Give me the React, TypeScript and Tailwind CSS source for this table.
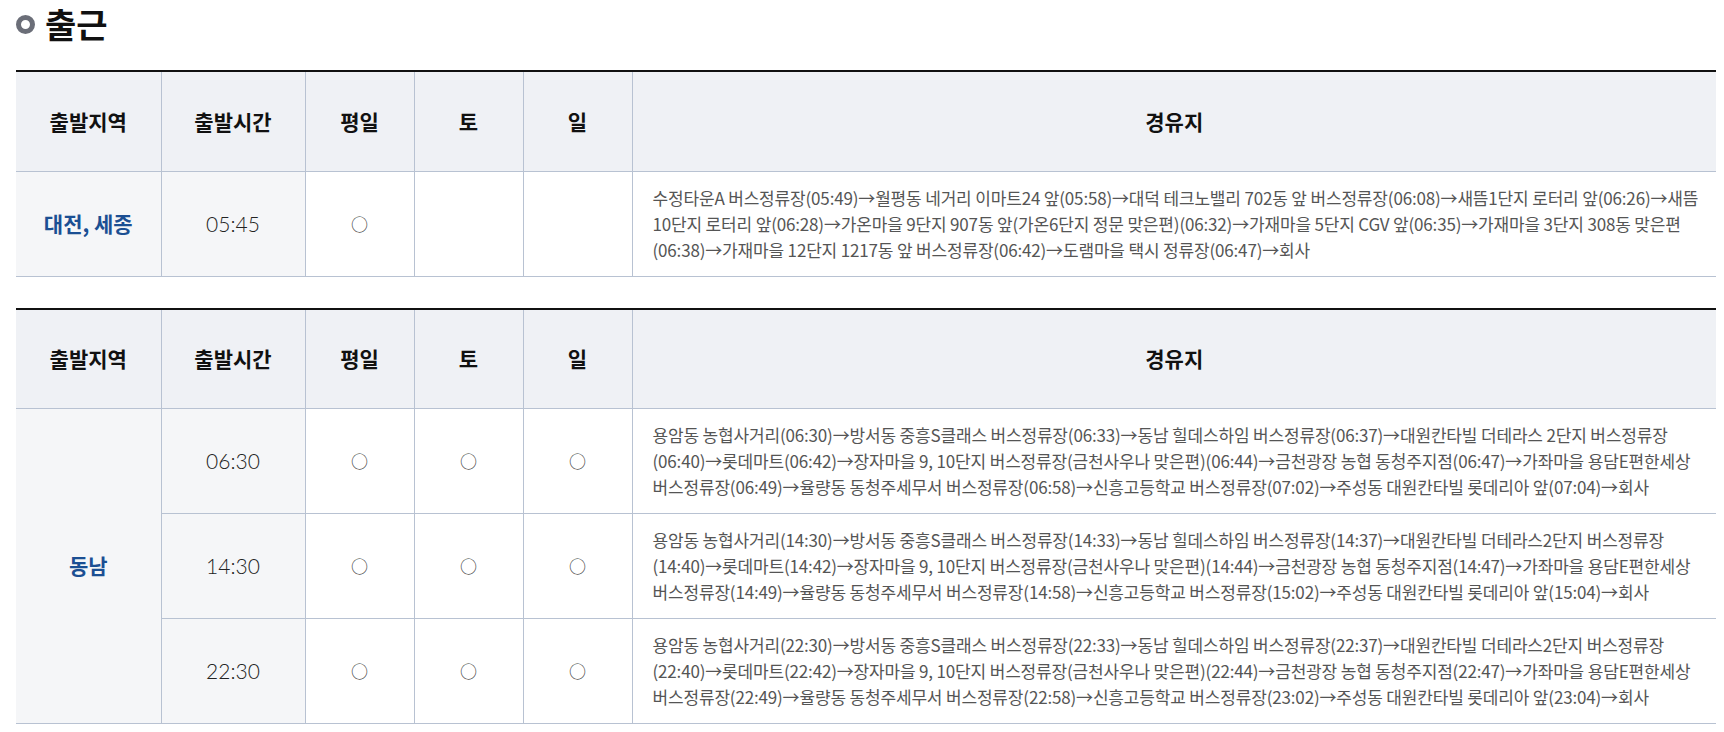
import React from 'react';

interface Trip {
  time: string;
  weekday: boolean;
  sat: boolean;
  sun: boolean;
  route: string;
}

interface Area {
  name: string;
  trips: Trip[];
}

const dongnamRoute = (t: string[]) =>
  `용암동 농협사거리(${t[0]})→방서동 중흥S클래스 버스정류장(${t[1]})→동남 힐데스하임 버스정류장(${t[2]})→대원칸타빌 더테라스${t[3]}2단지 버스정류장(${t[4]})→롯데마트(${t[5]})→장자마을 9, 10단지 버스정류장(금천사우나 맞은편)(${t[6]})→금천광장 농협 동청주지점(${t[7]})→가좌마을 용담E편한세상 버스정류장(${t[8]})→율량동 동청주세무서 버스정류장(${t[9]})→신흥고등학교 버스정류장(${t[10]})→주성동 대원칸타빌 롯데리아 앞(${t[11]})→회사`;

const tables: Area[] = [
  {
    name: '대전, 세종',
    trips: [
      {
        time: '05:45',
        weekday: true,
        sat: false,
        sun: false,
        route:
          '수정타운A 버스정류장(05:49)→월평동 네거리 이마트24 앞(05:58)→대덕 테크노밸리 702동 앞 버스정류장(06:08)→새뜸1단지 로터리 앞(06:26)→새뜸 10단지 로터리 앞(06:28)→가온마을 9단지 907동 앞(가온6단지 정문 맞은편)(06:32)→가재마을 5단지 CGV 앞(06:35)→가재마을 3단지 308동 맞은편(06:38)→가재마을 12단지 1217동 앞 버스정류장(06:42)→도램마을 택시 정류장(06:47)→회사',
      },
    ],
  },
  {
    name: '동남',
    trips: [
      {
        time: '06:30',
        weekday: true,
        sat: true,
        sun: true,
        route: dongnamRoute(['06:30', '06:33', '06:37', ' ', '06:40', '06:42', '06:44', '06:47', '06:49', '06:58', '07:02', '07:04']),
      },
      {
        time: '14:30',
        weekday: true,
        sat: true,
        sun: true,
        route: dongnamRoute(['14:30', '14:33', '14:37', '', '14:40', '14:42', '14:44', '14:47', '14:49', '14:58', '15:02', '15:04']),
      },
      {
        time: '22:30',
        weekday: true,
        sat: true,
        sun: true,
        route: dongnamRoute(['22:30', '22:33', '22:37', '', '22:40', '22:42', '22:44', '22:47', '22:49', '22:58', '23:02', '23:04']),
      },
    ],
  },
];

const headers = ['출발지역', '출발시간', '평일', '토', '일', '경유지'];

function Mark({ on }: { on: boolean }) {
  return on ? <span className="text-[17px] text-[#444]">○</span> : null;
}

function ScheduleTable({ area }: { area: Area }) {
  return (
    <table className="w-full border-collapse table-fixed border-t-2 border-t-[#111]">
      <colgroup>
        <col className="w-[145px]" />
        <col className="w-[144px]" />
        <col className="w-[109px]" />
        <col className="w-[109px]" />
        <col className="w-[109px]" />
        <col />
      </colgroup>
      <thead>
        <tr className="h-[100px] bg-[#eff1f5]">
          {headers.map((h, i) => (
            <th
              key={h}
              className={`text-[21px] font-bold text-[#111] border-b border-[#b8c2d2] ${
                i < headers.length - 1 ? 'border-r' : ''
              }`}
            >
              {h}
            </th>
          ))}
        </tr>
      </thead>
      <tbody>
        {area.trips.map((trip, idx) => (
          <tr key={trip.time} className="border-b border-[#b8c2d2]">
            {idx === 0 && (
              <td
                rowSpan={area.trips.length}
                className="bg-[#f5f6f8] border-r border-[#b8c2d2] text-center text-[21px] font-bold text-[#1b4f93]"
              >
                {area.name}
              </td>
            )}
            <td className="bg-[#f5f6f8] border-r border-[#b8c2d2] text-center text-[21px] font-light text-[#222] font-['Lato',sans-serif]">
              {trip.time}
            </td>
            <td className="border-r border-[#b8c2d2] text-center">
              <Mark on={trip.weekday} />
            </td>
            <td className="border-r border-[#b8c2d2] text-center">
              <Mark on={trip.sat} />
            </td>
            <td className="border-r border-[#b8c2d2] text-center">
              <Mark on={trip.sun} />
            </td>
            <td className="pl-5 pr-4 py-[13px] text-[17px] leading-[26px] text-[#555] tracking-[-0.17px] break-keep">
              {trip.route}
            </td>
          </tr>
        ))}
      </tbody>
    </table>
  );
}

export default function App() {
  return (
    <div className="bg-white min-h-screen pl-4 pr-2 pt-[6px] font-['Noto_Sans_CJK_KR','Noto_Sans',sans-serif]">
      <h2 className="flex items-center gap-[10px] text-[34px] leading-none font-bold text-[#111] h-[36px] mb-[28px]">
        <span className="inline-block w-[19px] h-[19px] rounded-full border-[5px] border-[#6b6e78]" />
        출근
      </h2>
      <div className="flex flex-col gap-[31px]">
        {tables.map((area) => (
          <ScheduleTable key={area.name} area={area} />
        ))}
      </div>
    </div>
  );
}
